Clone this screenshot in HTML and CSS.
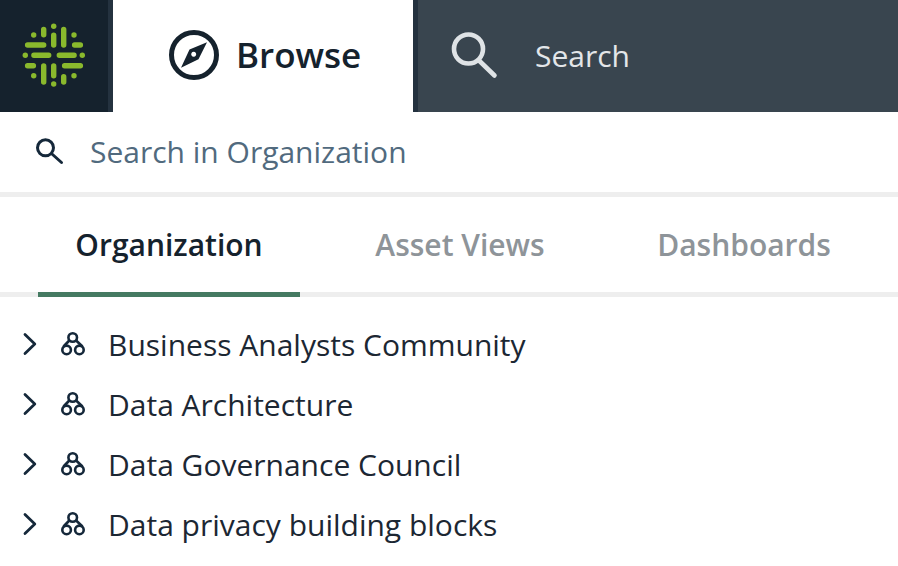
FILE: index.html
```html
<!DOCTYPE html>
<html lang="en">
<head>
<meta charset="utf-8">
<title>Browse</title>
<link rel="stylesheet" href="styles.css">
</head>
<body>
<header class="topbar">
  <div class="logo">
    <svg width="70" height="72" viewBox="19 20 70 72" fill="none" stroke="#8ab92d" stroke-linecap="round" stroke-width="5.400">
      <path d="M43.700 29.400v5.300M53.700 35.300v9.800M63.700 29.400v15.700M43.700 66v16M53.700 66v9.700M63.700 76.700v5.300"/>
      <path d="M27.600 45h16.100M74.600 45h5.800M33.900 55.300h14.800M59.300 55.300h14.800M27.600 65.700h5.800M64.600 65.700h15.800"/>
      <g fill="#8ab92d" stroke="none">
        <circle cx="53.700" cy="26.300" r="2.700"/><circle cx="53.700" cy="84" r="2.700"/><circle cx="25.300" cy="55.300" r="2.700"/><circle cx="82.300" cy="55.300" r="2.700"/>
        <circle cx="33.700" cy="35" r="2.700"/><circle cx="74" cy="35" r="2.700"/><circle cx="33.700" cy="75.700" r="2.700"/><circle cx="74" cy="75.700" r="2.700"/>
      </g>
    </svg>
  </div>
  <div class="browse">
    <svg class="compass" width="52" height="52" viewBox="0 0 52 52">
      <circle cx="26" cy="26" r="22.500" fill="none" stroke="#15222d" stroke-width="5"/>
      <path fill="#15222d" fill-rule="evenodd" d="M39 13.300 L30.500 30.300 L13 38.700 L21.500 20.500 Z M25.700 22.800a2.500 2.500 0 1 0 .01 0Z"/>
    </svg>
    <span class="browse-label">Browse</span>
  </div>
  <div class="global-search">
    <svg width="50" height="50" viewBox="0 0 50 50" fill="none" stroke="#dfe3e6" stroke-linecap="round">
      <circle cx="19.500" cy="19" r="14.500" stroke-width="4.600"/>
      <path d="M30 30.500 L45.500 45.500" stroke-width="4.600"/>
    </svg>
    <span>Search</span>
  </div>
</header>
<div class="org-search">
  <svg width="30" height="30" viewBox="0 0 30 30" fill="none" stroke="#15283a" stroke-linecap="round">
    <circle cx="9.500" cy="11.800" r="8" stroke-width="3"/>
    <path d="M16 18 L25.500 26.500" stroke-width="3"/>
  </svg>
  <span>Search in Organization</span>
</div>
<nav class="tabs">
  <div class="tab active">Organization</div>
  <div class="tab">Asset Views</div>
  <div class="tab">Dashboards</div>
</nav>
<ul class="tree">
  <li class="row">
    <svg class="chev" width="16" height="24" viewBox="0 0 16 24"><path d="M3 2.500 L12.800 12 L3 21.500"/></svg>
    <svg class="comm" width="26" height="26" viewBox="0 0 26 26"><circle cx="12.700" cy="6.500" r="4.300"/><circle cx="6.600" cy="18.900" r="4.300"/><circle cx="19.400" cy="18.900" r="4.300"/><path d="M9.300 9.500 L3.500 15.500M16.100 9.500 L22.500 15.500"/></svg>
    <span>Business Analysts Community</span>
  </li>
  <li class="row">
    <svg class="chev" width="16" height="24" viewBox="0 0 16 24"><path d="M3 2.500 L12.800 12 L3 21.500"/></svg>
    <svg class="comm" width="26" height="26" viewBox="0 0 26 26"><circle cx="12.700" cy="6.500" r="4.300"/><circle cx="6.600" cy="18.900" r="4.300"/><circle cx="19.400" cy="18.900" r="4.300"/><path d="M9.300 9.500 L3.500 15.500M16.100 9.500 L22.500 15.500"/></svg>
    <span>Data Architecture</span>
  </li>
  <li class="row">
    <svg class="chev" width="16" height="24" viewBox="0 0 16 24"><path d="M3 2.500 L12.800 12 L3 21.500"/></svg>
    <svg class="comm" width="26" height="26" viewBox="0 0 26 26"><circle cx="12.700" cy="6.500" r="4.300"/><circle cx="6.600" cy="18.900" r="4.300"/><circle cx="19.400" cy="18.900" r="4.300"/><path d="M9.300 9.500 L3.500 15.500M16.100 9.500 L22.500 15.500"/></svg>
    <span>Data Governance Council</span>
  </li>
  <li class="row">
    <svg class="chev" width="16" height="24" viewBox="0 0 16 24"><path d="M3 2.500 L12.800 12 L3 21.500"/></svg>
    <svg class="comm" width="26" height="26" viewBox="0 0 26 26"><circle cx="12.700" cy="6.500" r="4.300"/><circle cx="6.600" cy="18.900" r="4.300"/><circle cx="19.400" cy="18.900" r="4.300"/><path d="M9.300 9.500 L3.500 15.500M16.100 9.500 L22.500 15.500"/></svg>
    <span>Data privacy building blocks</span>
  </li>
</ul>
</body>
</html>
```
FILE: styles.css
```css
* { box-sizing: border-box; }
html, body { margin: 0; padding: 0; height: 100%; overflow: hidden; background: #fff; }
body { font-family: "Open Sans", sans-serif; color: #1c2733; }

.topbar { display: flex; height: 112px; }
.logo { width: 113px; background: #15222d; border-right: 5px solid #24323f; display: flex; align-items: center; justify-content: center; }
.browse { width: 300px; background: #fff; display: flex; align-items: center; gap: 16px; padding-left: 55px; padding-bottom: 2px; font-size: 35px; font-weight: 600; color: #15222d; }
.browse-label { margin-bottom: 2px; }
.compass { flex: none; }
.global-search { flex: 1; background: #39454f; border-left: 5px solid #24323f; display: flex; align-items: center; gap: 36px; padding-left: 31px; padding-bottom: 2px; font-size: 30px; color: #e3e6e9; }

.org-search { height: 85px; border-bottom: 5px solid #eeeeee; display: flex; align-items: center; gap: 24px; padding-left: 36px; padding-bottom: 2px; font-size: 30px; color: #516a7e; }

.tabs { height: 100px; border-bottom: 5px solid #eeeeee; display: flex; padding-left: 38px; font-size: 30px; font-weight: 600; color: #8e9499; }
.tab { height: 100px; display: flex; align-items: center; justify-content: center; width: 284px; padding-bottom: 5px; }
.tab.active { width: 262px; color: #15222d; border-bottom: 5px solid #457a62; padding-bottom: 0; margin-right: 18px; }

.tree { list-style: none; margin: 0; padding: 17px 0 0 0; }
.row { height: 60px; display: flex; align-items: center; font-size: 30px; color: #1c2733; padding-left: 22px; }
.chev { flex: none; margin-right: 22px; fill: none; stroke: #15283a; stroke-width: 2.800; stroke-linecap: round; stroke-linejoin: round; }
.comm { flex: none; margin-right: 22px; fill: none; stroke: #15283a; stroke-width: 2.600; }
```
